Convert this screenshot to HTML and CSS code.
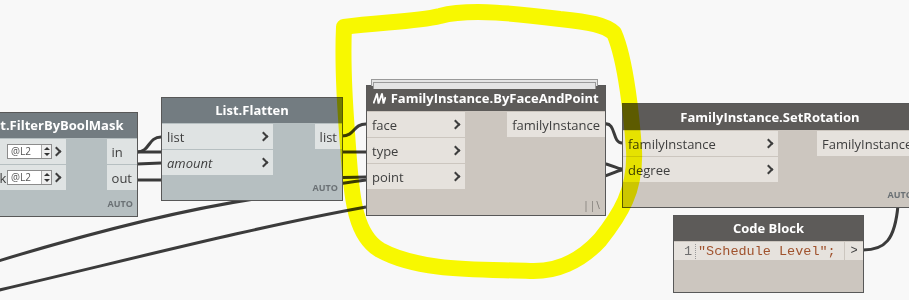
FILE: index.html
```html
<!doctype html>
<html lang="en">
	<head>
		<meta charset="UTF-8" />
		<title>Dynamo graph</title>
		<link rel="stylesheet" href="styles.css">
	</head>
	<body>
		<div class="canvas">
			<!-- wires sit under the nodes -->
			<svg class="wires" width="909" height="300" viewBox="0 0 909 300">
				<g fill="none" stroke="#3b3b3b" stroke-width="3">
					<path d="M137 152 C150 152, 148 137, 161 137" />
					<path d="M137 152 L366 152" />
					<path d="M137 164 L161 163" />
					<path d="M137 180 C250 180, 300 178, 366 177" />
					<path d="M342 136 C355 136, 353 124, 366 124" />
					<path d="M-5 262 C80 236, 180 210, 260 198 C300 192, 330 184, 366 180" />
					<path d="M-5 291 C120 262, 250 228, 366 207" />
					<path d="M605 124 C616 122, 612 143, 622 143" />
					<path d="M560 160 C612 160, 612 168, 622 169" />
					<path d="M560 180 C612 180, 612 171, 622 170" />
					<path d="M863 250 C885 250, 895 240, 898 205" />
				</g>
			</svg>

			<div class="node gray n-filter">
				<div class="node-head">List.FilterByBoolMask</div>
				<div class="node-body">
					<div class="ins">
						<div class="port"><span>list</span><span class="level">@L2<span class="spin"></span></span><span class="chev"></span></div>
						<div class="port"><span>mask</span><span class="level">@L2<span class="spin"></span></span><span class="chev"></span></div>
					</div>
					<div class="outs">
						<div class="port">in</div>
						<div class="port">out</div>
					</div>
				</div>
				<div class="node-foot">AUTO</div>
			</div>

			<div class="node gray n-flatten">
				<div class="node-head">List.Flatten</div>
				<div class="node-body">
					<div class="ins">
						<div class="port"><span>list</span><span class="chev"></span></div>
						<div class="port"><span class="opt">amount</span><span class="chev"></span></div>
					</div>
					<div class="outs">
						<div class="port">list</div>
					</div>
				</div>
				<div class="node-foot">AUTO</div>
			</div>

			<div class="node brown n-byface">
				<div class="node-head">
					<svg class="ico" width="13" height="11" viewBox="0 0 13 11">
						<polyline points="0.5,10.5 4,0.5 5.5,10.5 9,0.5 10.5,10.5 12.5,4" fill="none" stroke="#fff" stroke-width="1.8" />
					</svg>
					FamilyInstance.ByFaceAndPoint
				</div>
				<div class="node-body">
					<div class="ins">
						<div class="port"><span>face</span><span class="chev"></span></div>
						<div class="port"><span>type</span><span class="chev"></span></div>
						<div class="port"><span>point</span><span class="chev"></span></div>
					</div>
					<div class="outs">
						<div class="port">familyInstance</div>
					</div>
				</div>
				<div class="node-foot lace">||\</div>
			</div>

			<div class="node brown n-rotate">
				<div class="node-head">FamilyInstance.SetRotation</div>
				<div class="node-body">
					<div class="ins">
						<div class="port"><span>familyInstance</span><span class="chev"></span></div>
						<div class="port"><span>degree</span><span class="chev"></span></div>
					</div>
					<div class="outs">
						<div class="port">FamilyInstance</div>
					</div>
				</div>
				<div class="node-foot">AUTO</div>
			</div>

			<div class="node brown n-code">
				<div class="node-head">Code Block</div>
				<div class="code-row">
					<div class="code-line"><span class="ln">1</span><span class="str">"Schedule Level";</span></div>
					<div class="code-out">&gt;</div>
				</div>
			</div>

			<!-- highlighter ring drawn over everything -->
			<svg class="marker" width="909" height="300" viewBox="0 0 909 300">
				<path d="M344 27 C380 22, 415 22, 440 16 C470 8, 520 14, 560 19 C590 22, 605 25, 614 33 C626 60, 632 120, 634 150 C636 190, 620 215, 600 240 C580 262, 555 272, 530 271 C480 269, 420 272, 380 250 C356 236, 352 200, 349 160 C346 120, 342 70, 344 27 Z"
					fill="none" stroke="#ffff00" stroke-width="16" stroke-linejoin="round" />
			</svg>
		</div>
	</body>
</html>
```
FILE: styles.css
```css
body {
	margin: 0;
	background-color: #f8f8f8;
	font-family: 'Open Sans', 'DejaVu Sans', sans-serif;
}
.canvas {
	position: relative;
	width: 909px;
	height: 300px;
	overflow: hidden;
}
.wires, .marker {
	position: absolute;
	left: 0;
	top: 0;
}
.marker {
	z-index: 5;
	mix-blend-mode: multiply;
	pointer-events: none;
}
.node {
	position: absolute;
	z-index: 2;
	box-sizing: border-box;
	display: flex;
	flex-direction: column;
	border: 1px solid #585858;
	font-size: 13px;
	color: #3e3e3e;
}
.node-head {
	height: 25px;
	line-height: 25px;
	text-align: center;
	color: #fff;
	font-weight: bold;
	white-space: nowrap;
}
.node-body {
	display: flex;
	justify-content: space-between;
	margin-top: 1px;
}
.ins, .outs {
	display: flex;
	flex-direction: column;
	gap: 1px;
}
.port {
	height: 25px;
	display: flex;
	align-items: center;
	padding: 0 5px;
	box-sizing: border-box;
	white-space: nowrap;
}
.ins .port {
	padding-right: 3px;
}
.opt {
	font-style: italic;
}
.chev {
	margin-left: auto;
	margin-right: 3px;
	width: 5px;
	height: 5px;
	border-top: 2px solid #3d3d3d;
	border-right: 2px solid #3d3d3d;
	transform: rotate(45deg);
}
.level {
	position: relative;
	margin-left: auto;
	width: 45px;
	height: 15px;
	box-sizing: border-box;
	border: 1px solid #8c8c8c;
	background-color: #fff;
	font-size: 10px;
	line-height: 13px;
	color: #555;
	padding-left: 3px;
}
.level + .chev {
	margin-left: 1px;
}
.spin {
	position: absolute;
	right: 0;
	top: 0;
	bottom: 0;
	width: 9px;
	border-left: 1px solid #aaa;
	background-color: #eee;
}
.spin::before, .spin::after {
	content: '';
	position: absolute;
	left: 2px;
	border-left: 3px solid transparent;
	border-right: 3px solid transparent;
}
.spin::before {
	top: 2px;
	border-bottom: 3px solid #333;
}
.spin::after {
	bottom: 2px;
	border-top: 3px solid #333;
}
.node-foot {
	flex: 1;
	display: flex;
	align-items: flex-end;
	justify-content: flex-end;
	padding: 0 4px 6px;
	font-size: 9px;
	font-weight: bold;
	color: #6b7175;
}
.lace {
	font-size: 10px;
	font-weight: normal;
	letter-spacing: 1px;
	color: #7a7772;
	padding-bottom: 3px;
}
.ico {
	vertical-align: -1px;
	margin-right: 1px;
}

/* colour themes */
.gray {
	background-color: #b6bfc1;
}
.gray .node-head {
	background-color: #737c81;
}
.gray .port {
	background-color: #dfe3e3;
}
.brown {
	background-color: #ccc6bf;
}
.brown .node-head {
	background-color: #5d5b59;
}
.brown .port {
	background-color: #e6e2dd;
}

/* node placement on the canvas */
.n-filter {
	left: -32px;
	top: 112px;
	width: 170px;
	height: 105px;
}
.n-filter .ins {
	width: 97px;
}
.n-flatten {
	left: 161px;
	top: 97px;
	width: 182px;
	height: 104px;
}
.n-flatten .ins {
	width: 111px;
}
.n-byface {
	left: 366px;
	top: 85px;
	width: 240px;
	height: 131px;
}
.n-byface::before, .n-byface::after {
	content: '';
	position: absolute;
	height: 6px;
	border: 1px solid #9a9a9a;
	border-bottom: none;
	background-color: #e4e4e4;
}
.n-byface::before {
	top: -7px;
	left: 4px;
	right: 7px;
}
.n-byface::after {
	top: -4px;
	left: 6px;
	right: 9px;
}
.n-byface .ins {
	width: 98px;
}
.n-rotate {
	left: 622px;
	top: 103px;
	width: 296px;
	height: 105px;
}
.n-rotate .node-head {
	height: 26px;
	line-height: 26px;
}
.n-rotate .ins {
	width: 155px;
}
.n-rotate .outs .port {
	width: 100px;
}
.n-code {
	left: 673px;
	top: 215px;
	width: 191px;
	height: 78px;
}
.code-row {
	display: flex;
	gap: 1px;
	margin-top: 1px;
	height: 18px;
}
.code-line {
	flex: 1;
	display: flex;
	align-items: center;
	background-color: #e6e2dd;
	font-family: 'Liberation Mono', monospace;
	font-size: 13.5px;
	white-space: nowrap;
}
.ln {
	width: 18px;
	text-align: right;
	padding-right: 3px;
	margin-right: 2px;
	border-right: 1px dotted #9a9a9a;
	color: #6f6f6f;
}
.str {
	color: #a0522d;
}
.code-out {
	width: 18px;
	background-color: #e6e2dd;
	text-align: center;
	font-family: 'Liberation Mono', monospace;
	font-size: 12px;
	line-height: 18px;
	color: #444;
}
```
